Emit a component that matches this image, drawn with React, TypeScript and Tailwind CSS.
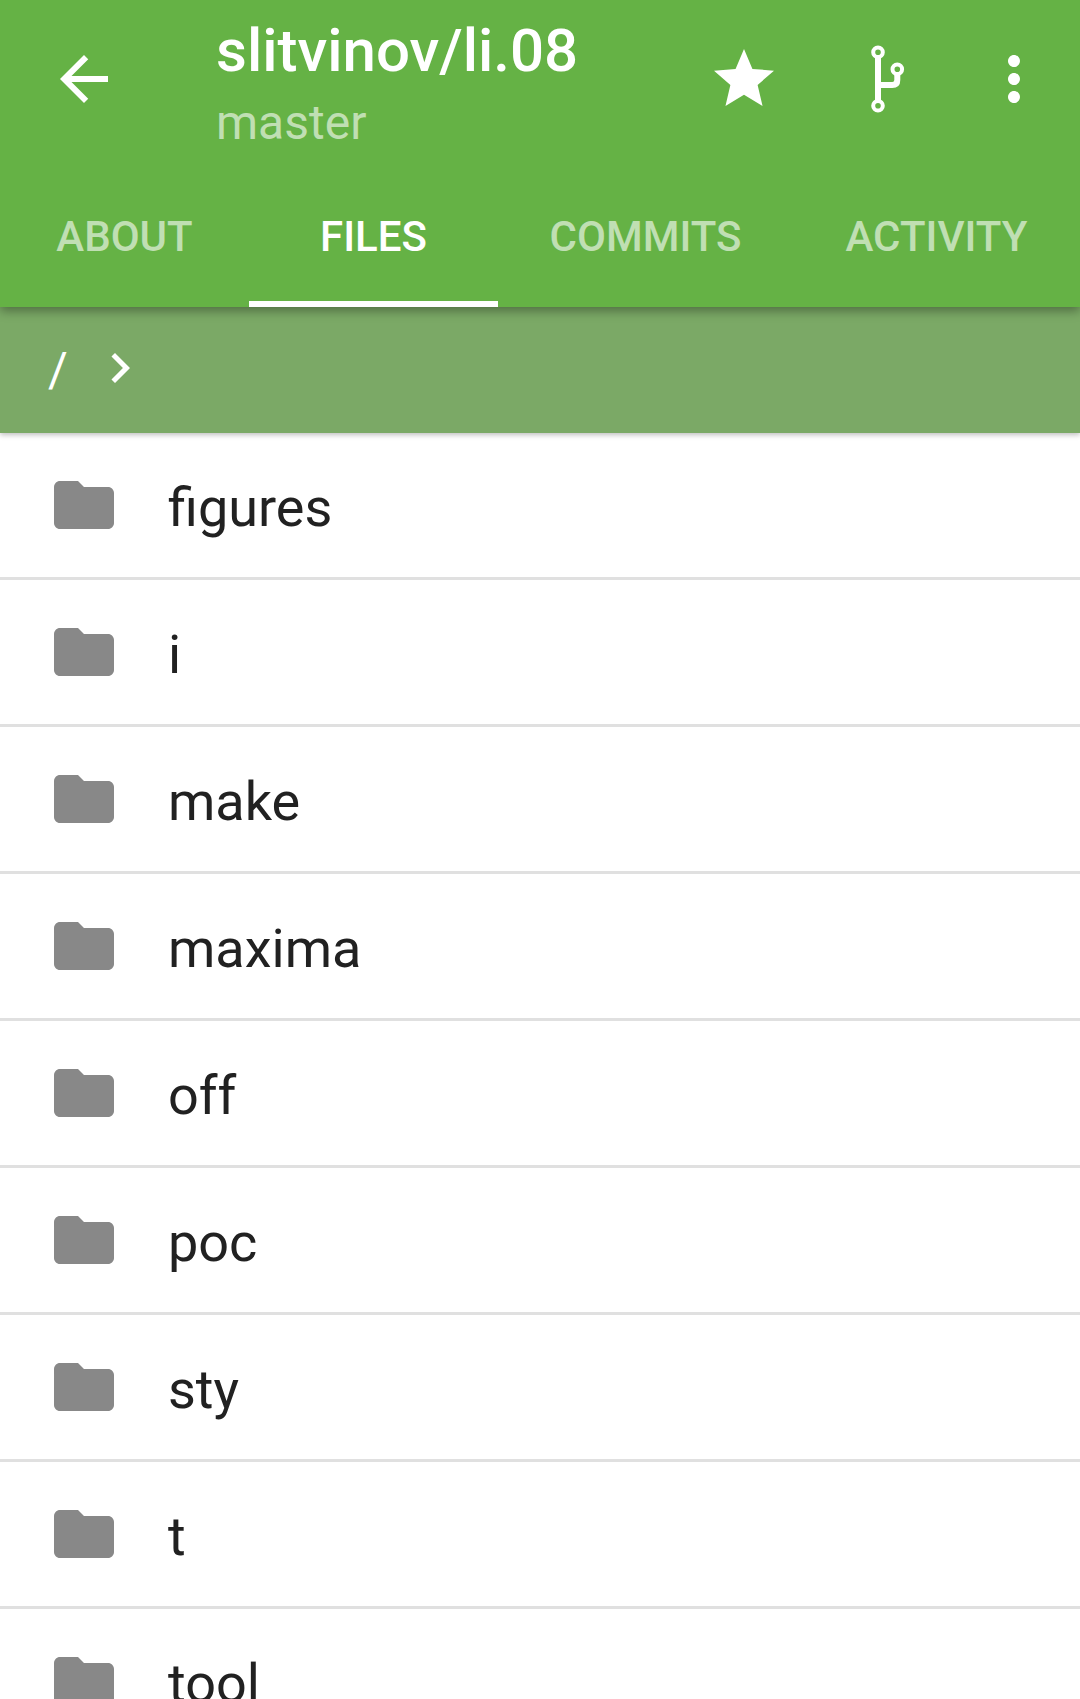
const FOLDERS = ['figures', 'i', 'make', 'maxima', 'off', 'poc', 'sty', 't', 'tool'];

const TABS = [
  { label: 'ABOUT', width: 'w-[249px]', active: false },
  { label: 'FILES', width: 'w-[249px]', active: true },
  { label: 'COMMITS', width: 'w-[295px]', active: false },
  { label: 'ACTIVITY', width: 'w-[287px]', active: false },
];

function FolderIcon() {
  return (
    <svg viewBox="0 0 24 24" className="w-[72px] h-[72px] shrink-0 fill-[#888888]">
      <path d="M10 4H4c-1.1 0-1.99.9-1.99 2L2 18c0 1.1.9 2 2 2h16c1.1 0 2-.9 2-2V8c0-1.1-.9-2-2-2h-8l-2-2z" />
    </svg>
  );
}

function BranchIcon() {
  return (
    <svg viewBox="0 0 72 72" className="w-[72px] h-[72px] shrink-0 fill-none stroke-white" strokeWidth="4">
      <circle cx="26" cy="9.3" r="4.8" />
      <circle cx="26" cy="62.7" r="4.8" />
      <circle cx="45.3" cy="26.3" r="4.8" />
      <path d="M26 14V58" strokeWidth="6" />
      <path d="M45.3 31V37Q45.3 42 40.3 42H26" strokeWidth="6" />
    </svg>
  );
}

export default function App() {
  return (
    <div className="w-[1080px] h-[1699px] overflow-hidden bg-white font-['Roboto',sans-serif]">
      {/* Toolbar and tabs */}
      <div className="relative z-20 bg-[#65b245] shadow-[0_4px_10px_rgba(0,0,0,0.35)]">
        <div className="flex h-[163px] items-start pl-12 pr-[30px]">
          <svg viewBox="0 0 24 24" className="w-[72px] h-[72px] shrink-0 mt-[43px] fill-white">
            <path d="M20 11H7.83l5.59-5.59L12 4l-8 8 8 8 1.41-1.41L7.83 13H20v-2z" />
          </svg>
          <div className="flex-1 ml-[96px] pt-[19px]">
            <div className="text-[60px] leading-[64px] font-medium text-white">slitvinov/li.08</div>
            <div className="text-[48px] leading-[56px] mt-[12px] text-white/60">master</div>
          </div>
          <svg viewBox="0 0 24 24" className="w-[72px] h-[72px] shrink-0 mt-[43px] fill-white">
            <path d="M12 17.27L18.18 21l-1.64-7.03L22 9.24l-7.19-.61L12 2 9.19 8.63 2 9.24l5.46 4.73L5.82 21z" />
          </svg>
          <div className="ml-[72px] mt-[43px]">
            <BranchIcon />
          </div>
          <svg viewBox="0 0 24 24" className="w-[72px] h-[72px] shrink-0 mt-[43px] ml-[54px] fill-white">
            <path d="M12 8c1.1 0 2-.9 2-2s-.9-2-2-2-2 .9-2 2 .9 2 2 2zm0 2c-1.1 0-2 .9-2 2s.9 2 2 2 2-.9 2-2-.9-2-2-2zm0 6c-1.1 0-2 .9-2 2s.9 2 2 2 2-.9 2-2-.9-2-2-2z" />
          </svg>
        </div>
        <div className="flex h-[144px]">
          {TABS.map((tab) => (
            <div
              key={tab.label}
              className={`${tab.width} flex items-center justify-center text-[42px] font-medium border-b-[6px] pt-[8px] ${
                tab.active ? 'text-white border-white' : 'text-white/60 border-transparent'
              }`}
            >
              {tab.label}
            </div>
          ))}
        </div>
      </div>

      {/* Breadcrumb */}
      <div className="relative z-10 flex h-[126px] items-center bg-[#7ba966] pl-12 shadow-[0_2px_5px_rgba(0,0,0,0.25)]">
        <span className="text-[48px] text-white">/</span>
        <svg viewBox="0 0 24 24" className="w-[60px] h-[60px] shrink-0 ml-[22px] mb-[4px] fill-white">
          <path d="M10 6L8.59 7.41 13.17 12l-4.58 4.59L10 18l6-6z" />
        </svg>
      </div>

      {/* Folder list */}
      <div>
        {FOLDERS.map((name) => (
          <div key={name} className="flex h-[147px] items-center pl-12 border-b-[3px] border-[#e0e0e0]">
            <FolderIcon />
            <span className="ml-12 pt-[4px] text-[54px] text-[#212121]">{name}</span>
          </div>
        ))}
      </div>
    </div>
  );
}
